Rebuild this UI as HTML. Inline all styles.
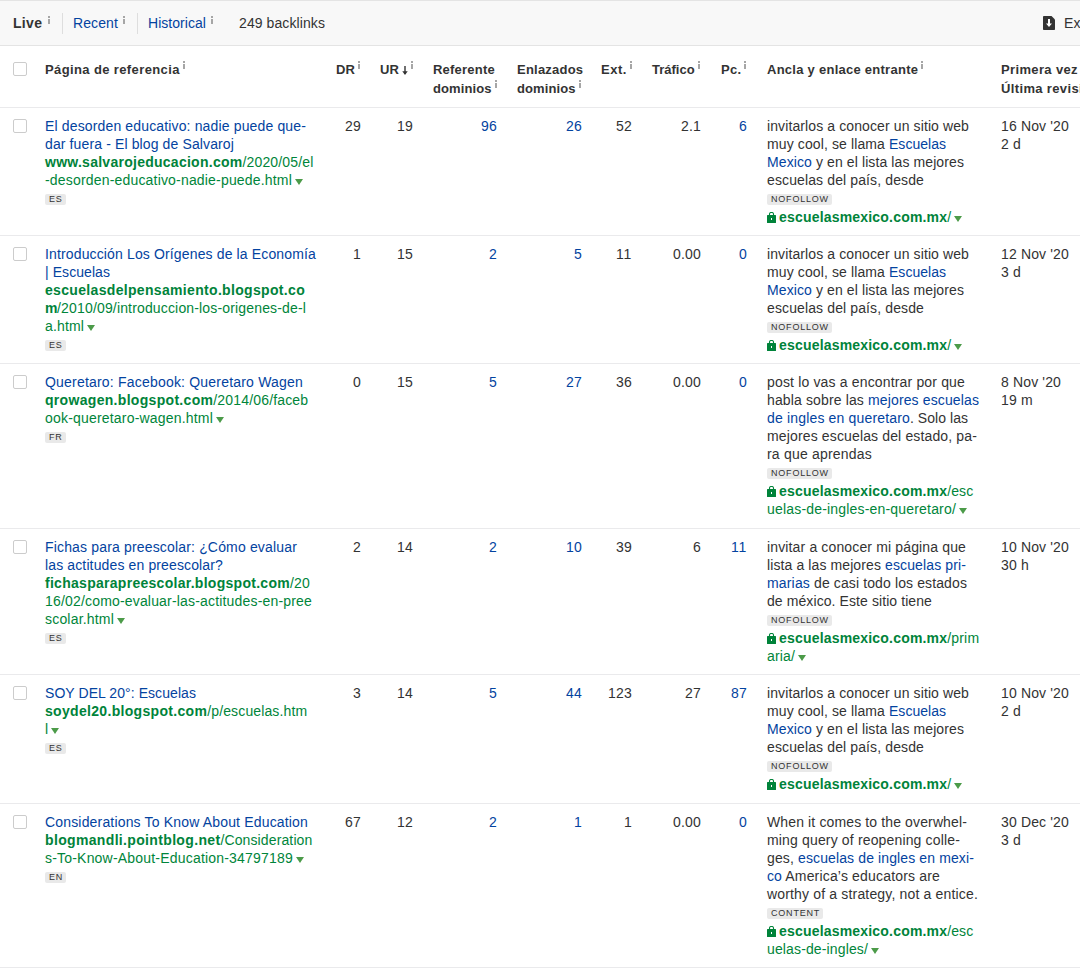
<!DOCTYPE html>
<html><head><meta charset="utf-8">
<style>
*{box-sizing:border-box}
html,body{margin:0;padding:0}
body{width:1080px;height:971px;overflow:hidden;position:relative;background:#fff;font-family:"Liberation Sans",sans-serif;font-size:14px;line-height:18px;color:#333}
.a{position:absolute;white-space:nowrap}
.bar{position:absolute;left:0;top:0;width:1080px;height:46px;background:#f8f8f8;border-top:1px solid #e4e4e4;border-bottom:1px solid #e4e4e4}
.sep{position:absolute;top:13px;width:1px;height:21px;background:#dedede}
.hl{position:absolute;left:0;width:1080px;height:1px;background:#eaeaec}
.cb{position:absolute;left:13px;width:14px;height:14px;border:1px solid #cccccc;border-radius:2px;background:#fff}
.i{display:inline-block;width:2px;height:8px;margin-left:5px;vertical-align:4px;background:linear-gradient(#a6a6a6 0,#a6a6a6 2px,transparent 2px,transparent 3px,#a6a6a6 3px)}
.hd{position:absolute;white-space:nowrap;font-size:13px;font-weight:bold;line-height:19px;color:#333}
.hd .i{margin-left:3px;vertical-align:5px}
.b{color:#0343a0}
.g{color:#00853a}
.gb{color:#00833a;font-weight:bold}
.num{position:absolute;text-align:right;white-space:nowrap}
.bd{height:19px;padding-top:5px;line-height:11px}
.arr{display:inline-block;vertical-align:-1px}
.badge{display:inline-block;height:11px;line-height:11px;font-size:9px;vertical-align:top;padding:0 3px 0 4px;background:#e9e9e9;border-radius:2px;color:#333;letter-spacing:0.8px}
.tri{display:inline-block;width:0;height:0;border-left:4px solid transparent;border-right:4px solid transparent;border-top:6px solid #4c9b49;margin-left:3px;vertical-align:0px}
.lock{display:inline-block;width:9px;height:11px;margin-right:3px;vertical-align:-1px}
</style></head><body>
<div class="bar"></div>
<div class="a" style="left:13px;top:14px"><b><span style="letter-spacing:0.306px">Live</span></b><span class="i" style="margin-left:6px"></span></div>
<div class="sep" style="left:62px"></div>
<div class="a b" style="left:73px;top:14px"><span style="letter-spacing:0.107px">Recent</span><span class="i"></span></div>
<div class="sep" style="left:137px"></div>
<div class="a b" style="left:148px;top:14px"><span style="letter-spacing:0.042px">Historical</span><span class="i"></span></div>
<div class="a" style="left:239px;top:14px"><span style="letter-spacing:0.090px">249 backlinks</span></div>
<svg class="a" style="left:1043px;top:16px" width="12" height="14" viewBox="0 0 12 14"><path d="M0 0.8Q0 0 0.8 0H8.5L12 3.5V13.2Q12 14 11.2 14H0.8Q0 14 0 13.2Z" fill="#333"/><path d="M5 3H7V7.5H9L6 11 3 7.5H5Z" fill="#fff"/></svg>
<div class="a" style="left:1064px;top:14px"><span style="letter-spacing:0.089px">Export</span></div>
<div class="cb" style="top:62px"></div>
<div class="hd" style="left:45px;top:60px"><span style="letter-spacing:0.38px">Página de referencia</span><span class="i"></span></div>
<div class="hd" style="left:336px;top:60px">DR<span class="i"></span></div>
<div class="hd" style="left:380px;top:60px">UR <svg class="arr" width="6" height="9" viewBox="0 0 6 9"><path d="M3 0V8" stroke="#333" stroke-width="1.4"/><path d="M0.3 5.2L3 9 5.7 5.2Z" fill="#333"/></svg><span class="i"></span></div>
<div class="hd" style="left:433px;top:60px"><span style="letter-spacing:0.22px">Referente</span><br><span style="letter-spacing:0.1px">dominios</span><span class="i"></span></div>
<div class="hd" style="left:517px;top:60px"><span style="letter-spacing:0.22px">Enlazados</span><br><span style="letter-spacing:0.1px">dominios</span><span class="i"></span></div>
<div class="hd" style="left:601px;top:60px"><span style="letter-spacing:0.5px">Ext.</span><span class="i"></span></div>
<div class="hd" style="left:652px;top:60px">Tráfico<span class="i"></span></div>
<div class="hd" style="left:721px;top:60px"><span style="letter-spacing:0.3px">Pc.</span><span class="i"></span></div>
<div class="hd" style="left:767px;top:60px"><span style="letter-spacing:0.26px">Ancla y enlace entrante</span><span class="i"></span></div>
<div class="hd" style="left:1001px;top:60px"><span style="letter-spacing:0.36px">Primera vez</span><br><span style="letter-spacing:0.36px">Última revisión</span></div>
<div class="hl" style="top:107px"></div>
<div class="cb" style="top:119px"></div>
<div class="a" style="left:45px;top:117px"><span class="b" style="letter-spacing:0.146px">El desorden educativo: nadie puede que-</span><br><span class="b" style="letter-spacing:0.122px">dar fuera - El blog de Salvaroj</span><br><span class="gb" style="letter-spacing:0.264px">www.salvarojeducacion.com</span><span class="g" style="letter-spacing:0.155px">/2020/05/el</span><br><span class="g" style="letter-spacing:0.181px">-desorden-educativo-nadie-puede.html</span><span class="tri"></span><div class="bd"><span class="badge">ES</span></div></div>
<div class="num" style="left:281px;width:80px;top:117px"><span style="letter-spacing:0.211px">29</span></div>
<div class="num" style="left:333px;width:80px;top:117px"><span style="letter-spacing:0.211px">19</span></div>
<div class="num b" style="left:417px;width:80px;top:117px"><span style="letter-spacing:0.211px">96</span></div>
<div class="num b" style="left:502px;width:80px;top:117px"><span style="letter-spacing:0.211px">26</span></div>
<div class="num" style="left:552px;width:80px;top:117px"><span style="letter-spacing:0.211px">52</span></div>
<div class="num" style="left:621px;width:80px;top:117px"><span style="letter-spacing:0.177px">2.1</span></div>
<div class="num b" style="left:667px;width:80px;top:117px"><span style="letter-spacing:0.203px">6</span></div>
<div class="a" style="left:767px;top:117px"><span style="letter-spacing:0.108px">invitarlos a conocer un sitio web</span><br><span style="letter-spacing:0.114px">muy cool, se llama </span><span class="b" style="letter-spacing:0.023px">Escuelas</span><br><span class="b" style="letter-spacing:0.107px">Mexico</span><span style="letter-spacing:0.100px"> y en el lista las mejores</span><br><span style="letter-spacing:0.120px">escuelas del país, desde</span><div class="bd"><span class="badge">NOFOLLOW</span></div><svg class="lock" width="9" height="11" viewBox="0 0 9 11"><path d="M2.5 4V2Q2.5 0.5 4 0.5H5Q6.5 0.5 6.5 2V4" fill="none" stroke="#00833a" stroke-width="1.1"/><rect x="0" y="3" width="9" height="8" rx="0.5" fill="#00833a"/><rect x="4" y="6" width="1" height="2" fill="#fff"/></svg><span class="gb" style="letter-spacing:0.192px">escuelasmexico.com.mx</span><span class="g" style="letter-spacing:0.109px">/</span><span class="tri"></span></div>
<div class="a" style="left:1001px;top:117px"><span style="letter-spacing:0.150px">16 Nov &#x27;20</span><br><span style="letter-spacing:0.177px">2 d</span></div>
<div class="hl" style="top:235px"></div>
<div class="cb" style="top:247px"></div>
<div class="a" style="left:45px;top:245px"><span class="b" style="letter-spacing:0.140px">Introducción Los Orígenes de la Economía</span><br><span class="b" style="letter-spacing:0.066px">| Escuelas</span><br><span class="gb" style="letter-spacing:0.326px">escuelasdelpensamiento.blogspot.co</span><br><span class="gb" style="letter-spacing:-0.393px">m</span><span class="g" style="letter-spacing:0.159px">/2010/09/introduccion-los-origenes-de-l</span><br><span class="g" style="letter-spacing:0.146px">a.html</span><span class="tri"></span><div class="bd"><span class="badge">ES</span></div></div>
<div class="num" style="left:281px;width:80px;top:245px"><span style="letter-spacing:0.203px">1</span></div>
<div class="num" style="left:333px;width:80px;top:245px"><span style="letter-spacing:0.211px">15</span></div>
<div class="num b" style="left:417px;width:80px;top:245px"><span style="letter-spacing:0.203px">2</span></div>
<div class="num b" style="left:502px;width:80px;top:245px"><span style="letter-spacing:0.203px">5</span></div>
<div class="num" style="left:552px;width:80px;top:245px"><span style="letter-spacing:0.727px">11</span></div>
<div class="num" style="left:621px;width:80px;top:245px"><span style="letter-spacing:0.188px">0.00</span></div>
<div class="num b" style="left:667px;width:80px;top:245px"><span style="letter-spacing:0.203px">0</span></div>
<div class="a" style="left:767px;top:245px"><span style="letter-spacing:0.108px">invitarlos a conocer un sitio web</span><br><span style="letter-spacing:0.114px">muy cool, se llama </span><span class="b" style="letter-spacing:0.023px">Escuelas</span><br><span class="b" style="letter-spacing:0.107px">Mexico</span><span style="letter-spacing:0.100px"> y en el lista las mejores</span><br><span style="letter-spacing:0.120px">escuelas del país, desde</span><div class="bd"><span class="badge">NOFOLLOW</span></div><svg class="lock" width="9" height="11" viewBox="0 0 9 11"><path d="M2.5 4V2Q2.5 0.5 4 0.5H5Q6.5 0.5 6.5 2V4" fill="none" stroke="#00833a" stroke-width="1.1"/><rect x="0" y="3" width="9" height="8" rx="0.5" fill="#00833a"/><rect x="4" y="6" width="1" height="2" fill="#fff"/></svg><span class="gb" style="letter-spacing:0.192px">escuelasmexico.com.mx</span><span class="g" style="letter-spacing:0.109px">/</span><span class="tri"></span></div>
<div class="a" style="left:1001px;top:245px"><span style="letter-spacing:0.150px">12 Nov &#x27;20</span><br><span style="letter-spacing:0.177px">3 d</span></div>
<div class="hl" style="top:363px"></div>
<div class="cb" style="top:375px"></div>
<div class="a" style="left:45px;top:373px"><span class="b" style="letter-spacing:0.199px">Queretaro: Facebook: Queretaro Wagen</span><br><span class="gb" style="letter-spacing:0.309px">qrowagen.blogspot.com</span><span class="g" style="letter-spacing:0.169px">/2014/06/faceb</span><br><span class="g" style="letter-spacing:0.191px">ook-queretaro-wagen.html</span><span class="tri"></span><div class="bd"><span class="badge">FR</span></div></div>
<div class="num" style="left:281px;width:80px;top:373px"><span style="letter-spacing:0.203px">0</span></div>
<div class="num" style="left:333px;width:80px;top:373px"><span style="letter-spacing:0.211px">15</span></div>
<div class="num b" style="left:417px;width:80px;top:373px"><span style="letter-spacing:0.203px">5</span></div>
<div class="num b" style="left:502px;width:80px;top:373px"><span style="letter-spacing:0.211px">27</span></div>
<div class="num" style="left:552px;width:80px;top:373px"><span style="letter-spacing:0.211px">36</span></div>
<div class="num" style="left:621px;width:80px;top:373px"><span style="letter-spacing:0.188px">0.00</span></div>
<div class="num b" style="left:667px;width:80px;top:373px"><span style="letter-spacing:0.203px">0</span></div>
<div class="a" style="left:767px;top:373px"><span style="letter-spacing:0.161px">post lo vas a encontrar por que</span><br><span style="letter-spacing:0.135px">habla sobre las </span><span class="b" style="letter-spacing:0.129px">mejores escuelas</span><br><span class="b" style="letter-spacing:0.167px">de ingles en queretaro</span><span style="letter-spacing:0.041px">. Solo las</span><br><span style="letter-spacing:0.142px">mejores escuelas del estado, pa-</span><br><span style="letter-spacing:0.202px">ra que aprendas</span><div class="bd"><span class="badge">NOFOLLOW</span></div><svg class="lock" width="9" height="11" viewBox="0 0 9 11"><path d="M2.5 4V2Q2.5 0.5 4 0.5H5Q6.5 0.5 6.5 2V4" fill="none" stroke="#00833a" stroke-width="1.1"/><rect x="0" y="3" width="9" height="8" rx="0.5" fill="#00833a"/><rect x="4" y="6" width="1" height="2" fill="#fff"/></svg><span class="gb" style="letter-spacing:0.192px">escuelasmexico.com.mx</span><span class="g" style="letter-spacing:0.078px">/esc</span><br><span class="g" style="letter-spacing:0.184px">uelas-de-ingles-en-queretaro/</span><span class="tri"></span></div>
<div class="a" style="left:1001px;top:373px"><span style="letter-spacing:0.142px">8 Nov &#x27;20</span><br><span style="letter-spacing:0.219px">19 m</span></div>
<div class="hl" style="top:528px"></div>
<div class="cb" style="top:540px"></div>
<div class="a" style="left:45px;top:538px"><span class="b" style="letter-spacing:0.165px">Fichas para preescolar: ¿Cómo evaluar</span><br><span class="b" style="letter-spacing:0.131px">las actitudes en preescolar?</span><br><span class="gb" style="letter-spacing:0.280px">fichasparapreescolar.blogspot.com</span><span class="g" style="letter-spacing:0.177px">/20</span><br><span class="g" style="letter-spacing:0.177px">16/02/como-evaluar-las-actitudes-en-pree</span><br><span class="g" style="letter-spacing:0.189px">scolar.html</span><span class="tri"></span><div class="bd"><span class="badge">ES</span></div></div>
<div class="num" style="left:281px;width:80px;top:538px"><span style="letter-spacing:0.203px">2</span></div>
<div class="num" style="left:333px;width:80px;top:538px"><span style="letter-spacing:0.211px">14</span></div>
<div class="num b" style="left:417px;width:80px;top:538px"><span style="letter-spacing:0.203px">2</span></div>
<div class="num b" style="left:502px;width:80px;top:538px"><span style="letter-spacing:0.211px">10</span></div>
<div class="num" style="left:552px;width:80px;top:538px"><span style="letter-spacing:0.211px">39</span></div>
<div class="num" style="left:621px;width:80px;top:538px"><span style="letter-spacing:0.203px">6</span></div>
<div class="num b" style="left:667px;width:80px;top:538px"><span style="letter-spacing:0.727px">11</span></div>
<div class="a" style="left:767px;top:538px"><span style="letter-spacing:0.143px">invitar a conocer mi página que</span><br><span style="letter-spacing:0.103px">lista a las mejores </span><span class="b" style="letter-spacing:0.125px">escuelas pri-</span><br><span class="b" style="letter-spacing:0.164px">marias</span><span style="letter-spacing:0.116px"> de casi todo los estados</span><br><span style="letter-spacing:0.087px">de méxico. Este sitio tiene</span><div class="bd"><span class="badge">NOFOLLOW</span></div><svg class="lock" width="9" height="11" viewBox="0 0 9 11"><path d="M2.5 4V2Q2.5 0.5 4 0.5H5Q6.5 0.5 6.5 2V4" fill="none" stroke="#00833a" stroke-width="1.1"/><rect x="0" y="3" width="9" height="8" rx="0.5" fill="#00833a"/><rect x="4" y="6" width="1" height="2" fill="#fff"/></svg><span class="gb" style="letter-spacing:0.192px">escuelasmexico.com.mx</span><span class="g" style="letter-spacing:0.175px">/prim</span><br><span class="g" style="letter-spacing:0.153px">aria/</span><span class="tri"></span></div>
<div class="a" style="left:1001px;top:538px"><span style="letter-spacing:0.150px">10 Nov &#x27;20</span><br><span style="letter-spacing:0.188px">30 h</span></div>
<div class="hl" style="top:674px"></div>
<div class="cb" style="top:686px"></div>
<div class="a" style="left:45px;top:684px"><span class="b" style="letter-spacing:0.068px">SOY DEL 20°: Escuelas</span><br><span class="gb" style="letter-spacing:0.317px">soydel20.blogspot.com</span><span class="g" style="letter-spacing:0.129px">/p/escuelas.htm</span><br><span class="g" style="letter-spacing:-0.125px">l</span><span class="tri"></span><div class="bd"><span class="badge">ES</span></div></div>
<div class="num" style="left:281px;width:80px;top:684px"><span style="letter-spacing:0.203px">3</span></div>
<div class="num" style="left:333px;width:80px;top:684px"><span style="letter-spacing:0.211px">14</span></div>
<div class="num b" style="left:417px;width:80px;top:684px"><span style="letter-spacing:0.203px">5</span></div>
<div class="num b" style="left:502px;width:80px;top:684px"><span style="letter-spacing:0.211px">44</span></div>
<div class="num" style="left:552px;width:80px;top:684px"><span style="letter-spacing:0.214px">123</span></div>
<div class="num" style="left:621px;width:80px;top:684px"><span style="letter-spacing:0.211px">27</span></div>
<div class="num b" style="left:667px;width:80px;top:684px"><span style="letter-spacing:0.211px">87</span></div>
<div class="a" style="left:767px;top:684px"><span style="letter-spacing:0.108px">invitarlos a conocer un sitio web</span><br><span style="letter-spacing:0.114px">muy cool, se llama </span><span class="b" style="letter-spacing:0.023px">Escuelas</span><br><span class="b" style="letter-spacing:0.107px">Mexico</span><span style="letter-spacing:0.100px"> y en el lista las mejores</span><br><span style="letter-spacing:0.120px">escuelas del país, desde</span><div class="bd"><span class="badge">NOFOLLOW</span></div><svg class="lock" width="9" height="11" viewBox="0 0 9 11"><path d="M2.5 4V2Q2.5 0.5 4 0.5H5Q6.5 0.5 6.5 2V4" fill="none" stroke="#00833a" stroke-width="1.1"/><rect x="0" y="3" width="9" height="8" rx="0.5" fill="#00833a"/><rect x="4" y="6" width="1" height="2" fill="#fff"/></svg><span class="gb" style="letter-spacing:0.192px">escuelasmexico.com.mx</span><span class="g" style="letter-spacing:0.109px">/</span><span class="tri"></span></div>
<div class="a" style="left:1001px;top:684px"><span style="letter-spacing:0.150px">10 Nov &#x27;20</span><br><span style="letter-spacing:0.177px">2 d</span></div>
<div class="hl" style="top:803px"></div>
<div class="cb" style="top:815px"></div>
<div class="a" style="left:45px;top:813px"><span class="b" style="letter-spacing:0.169px">Considerations To Know About Education</span><br><span class="gb" style="letter-spacing:0.343px">blogmandli.pointblog.net</span><span class="g" style="letter-spacing:0.123px">/Consideration</span><br><span class="g" style="letter-spacing:0.198px">s-To-Know-About-Education-34797189</span><span class="tri"></span><div class="bd"><span class="badge">EN</span></div></div>
<div class="num" style="left:281px;width:80px;top:813px"><span style="letter-spacing:0.211px">67</span></div>
<div class="num" style="left:333px;width:80px;top:813px"><span style="letter-spacing:0.211px">12</span></div>
<div class="num b" style="left:417px;width:80px;top:813px"><span style="letter-spacing:0.203px">2</span></div>
<div class="num b" style="left:502px;width:80px;top:813px"><span style="letter-spacing:0.203px">1</span></div>
<div class="num" style="left:552px;width:80px;top:813px"><span style="letter-spacing:0.203px">1</span></div>
<div class="num" style="left:621px;width:80px;top:813px"><span style="letter-spacing:0.188px">0.00</span></div>
<div class="num b" style="left:667px;width:80px;top:813px"><span style="letter-spacing:0.203px">0</span></div>
<div class="a" style="left:767px;top:813px"><span style="letter-spacing:0.130px">When it comes to the overwhel-</span><br><span style="letter-spacing:0.155px">ming query of reopening colle-</span><br><span style="letter-spacing:0.128px">ges, </span><span class="b" style="letter-spacing:0.120px">escuelas de ingles en mexi-</span><br><span class="b" style="letter-spacing:0.102px">co</span><span style="letter-spacing:0.174px"> America’s educators are</span><br><span style="letter-spacing:0.166px">worthy of a strategy, not a entice.</span><div class="bd"><span class="badge">CONTENT</span></div><svg class="lock" width="9" height="11" viewBox="0 0 9 11"><path d="M2.5 4V2Q2.5 0.5 4 0.5H5Q6.5 0.5 6.5 2V4" fill="none" stroke="#00833a" stroke-width="1.1"/><rect x="0" y="3" width="9" height="8" rx="0.5" fill="#00833a"/><rect x="4" y="6" width="1" height="2" fill="#fff"/></svg><span class="gb" style="letter-spacing:0.192px">escuelasmexico.com.mx</span><span class="g" style="letter-spacing:0.078px">/esc</span><br><span class="g" style="letter-spacing:0.135px">uelas-de-ingles/</span><span class="tri"></span></div>
<div class="a" style="left:1001px;top:813px"><span style="letter-spacing:0.150px">30 Dec &#x27;20</span><br><span style="letter-spacing:0.177px">3 d</span></div>
<div class="hl" style="top:967px"></div>
</body></html>
